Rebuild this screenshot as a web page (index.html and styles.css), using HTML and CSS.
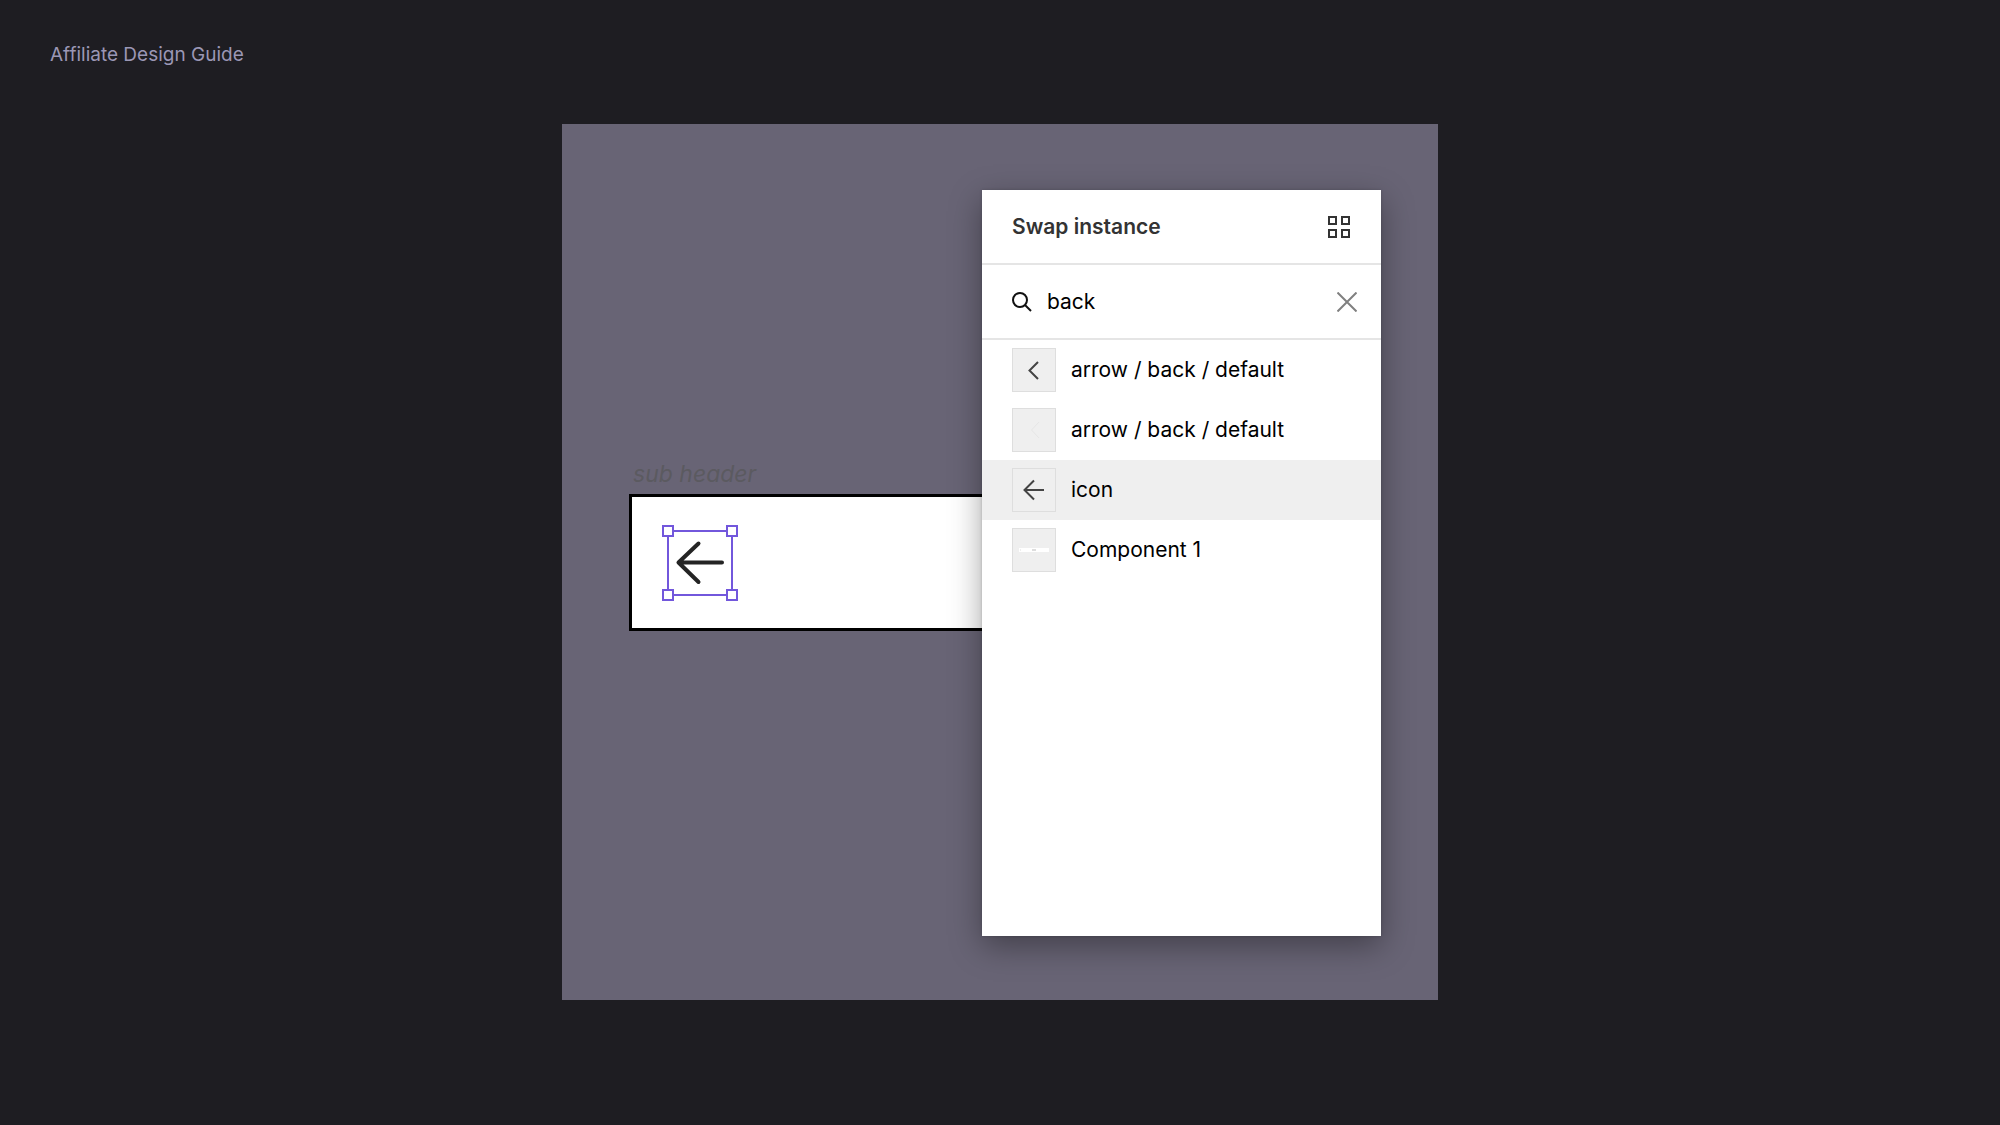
FILE: index.html
```html
<!DOCTYPE html>
<html lang="en">
<head>
<meta charset="utf-8">
<meta name="viewport" content="width=device-width, initial-scale=1">
<title>Affiliate Design Guide</title>
<link rel="stylesheet" href="styles.css">
</head>
<body>
<header class="page-header">
  <h1 class="page-title">Affiliate Design Guide</h1>
</header>
<main class="canvas">
  <section class="frame" aria-label="sub header">
    <p class="frame-name">sub header</p>
    <div class="frame-box">
      <svg class="selection" viewBox="0 0 76 76" aria-hidden="true">
        <rect class="selection-line" x="6" y="6" width="64" height="64"/>
        <g class="selection-handle">
          <rect x="1" y="1" width="10" height="10"/>
          <rect x="65" y="1" width="10" height="10"/>
          <rect x="1" y="65" width="10" height="10"/>
          <rect x="65" y="65" width="10" height="10"/>
        </g>
        <path class="selection-arrow" d="M60 37.5H16.5M36.5 18.5L16.5 37.5L36.5 57"/>
      </svg>
    </div>
  </section>
  <section class="panel">
    <header class="panel-header">
      <h2 class="panel-title">Swap instance</h2>
      <button class="icon-button" type="button" aria-label="Grid view">
        <svg class="icon-grid" viewBox="0 0 24 24"><path d="M2 2h7v7H2zM15 2h7v7h-7zM2 15h7v7H2zM15 15h7v7h-7z"/></svg>
      </button>
    </header>
    <form class="search">
      <svg class="icon-search" viewBox="0 0 20 20" aria-hidden="true"><circle cx="8" cy="8" r="7"/><path d="M13 13l6 6"/></svg>
      <input class="search-input" type="text" value="back" aria-label="Search">
      <button class="icon-button" type="button" aria-label="Clear search">
        <svg class="icon-close" viewBox="0 0 20 20"><path d="M0.5 0.5l19 19M19.5 0.5l-19 19"/></svg>
      </button>
    </form>
    <ul class="results">
      <li><button class="result" type="button">
        <svg class="thumb" viewBox="0 0 44 44" aria-hidden="true"><path d="M26 14l-8.500 8.500L26 31"/></svg>
        arrow / back / default
      </button></li>
      <li><button class="result" type="button">
        <svg class="thumb thumb-faint" viewBox="0 0 44 44" aria-hidden="true"><path d="M27 14l-7.500 8L27 30"/></svg>
        arrow / back / default
      </button></li>
      <li><button class="result result-active" type="button">
        <svg class="thumb" viewBox="0 0 44 44" aria-hidden="true"><path d="M32 22H12M22 12.500l-9.500 9.500l9.500 9.500"/></svg>
        icon
      </button></li>
      <li><button class="result" type="button">
        <svg class="thumb thumb-bar" viewBox="0 0 44 44" aria-hidden="true"><rect x="7" y="20" width="30" height="4" fill="#fff"/><rect x="20" y="21" width="4" height="2" fill="#ddd"/><rect x="8" y="21" width="1" height="2" fill="#eee"/></svg>
        Component 1
      </button></li>
    </ul>
  </section>
</main>
</body>
</html>
```
FILE: styles.css
```css
* {
  box-sizing: border-box;
}

body {
  margin: 0;
  min-height: 100vh;
  background: #1e1d22;
  color: #000;
  font: 21px/32px Inter, "Liberation Sans", sans-serif;
}

h1, h2, p, ul {
  margin: 0;
  padding: 0;
}

ul {
  list-style: none;
}

button, input {
  border: 0;
  padding: 0;
  background: none;
  color: inherit;
  font: inherit;
}

svg {
  display: block;
  flex: none;
  fill: none;
}

.page-header {
  height: 124px;
  padding: 39px 50px 0;
}

.page-title {
  color: #9b97b5;
  font-size: 19px;
  font-weight: 400;
}

.canvas {
  position: relative;
  width: 43.8%;
  min-width: 560px;
  aspect-ratio: 1;
  margin: 0 auto;
  overflow: hidden;
  background: #686475;
}

/* Objects placed freely on the canvas */
.frame {
  position: absolute;
  top: 334px;
  left: 67px;
  right: 57px;
}

.frame-name {
  padding-left: 4px;
  height: 36px;
  color: #5b5a60;
  font-size: 23px;
  font-style: italic;
}

.frame-box {
  height: 137px;
  padding: 28px 30px;
  border: 3px solid #000;
  background: #fff;
}

.panel {
  position: absolute;
  top: 66px;
  right: 57px;
  bottom: 64px;
  width: 399px;
  background: #fff;
  box-shadow: 0 10px 30px rgba(0, 0, 0, 0.36), 0 0 3px rgba(0, 0, 0, 0.16);
}

.selection {
  width: 76px;
  height: 76px;
}

.selection-line {
  stroke: #7257dc;
  stroke-width: 2;
}

.selection-handle {
  fill: #fff;
  stroke: #7257dc;
  stroke-width: 2;
}

.selection-arrow {
  stroke: #242424;
  stroke-width: 4;
  stroke-linecap: round;
  stroke-linejoin: round;
}

.panel-header, .search {
  display: flex;
  align-items: center;
  height: 75px;
  padding: 0 24px 0 30px;
  border-bottom: 2px solid #e5e5e5;
}

.panel-header {
  justify-content: space-between;
  padding-right: 30px;
}

.panel-title {
  color: #333;
  font-size: 21px;
  font-weight: 600;
}

.search {
  gap: 15px;
}

.search-input {
  flex: 1;
  min-width: 0;
  outline: 0;
}

.icon-grid {
  width: 24px;
  height: 24px;
  stroke: #333;
  stroke-width: 2;
}

.icon-search {
  width: 20px;
  height: 20px;
  stroke: #111;
  stroke-width: 2;
}

.icon-close {
  width: 20px;
  height: 20px;
  stroke: #808080;
  stroke-width: 2;
}

.result {
  display: flex;
  align-items: center;
  gap: 15px;
  width: 100%;
  height: 60px;
  padding: 0 30px;
  text-align: left;
}

.result-active {
  background: #efefef;
}

.thumb {
  width: 44px;
  height: 44px;
  outline: 1px solid #dedede;
  outline-offset: -1px;
  background: #efefef;
  stroke: #444;
  stroke-width: 2;
}

.thumb-faint {
  stroke: #e6e6e6;
  stroke-width: 1;
}

.thumb-bar {
  stroke: none;
}
```
